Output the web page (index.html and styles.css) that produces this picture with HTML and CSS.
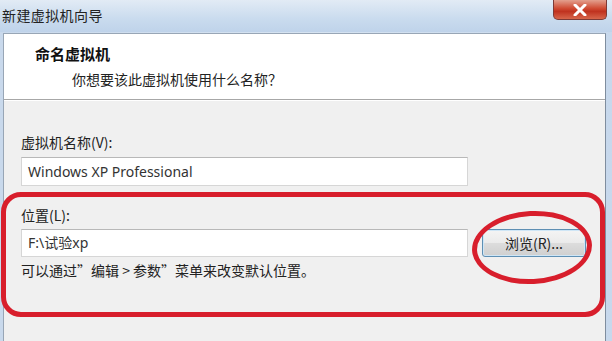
FILE: index.html
```html
<!DOCTYPE html>
<html lang="zh-CN">
<head>
<meta charset="utf-8">
<title>新建虚拟机向导</title>
<link rel="stylesheet" href="styles.css">
</head>
<body>
<div class="window">
  <div class="titlebar">
    <span class="title">新建虚拟机向导</span>
    <div class="close">
      <svg width="16" height="12" viewBox="0 0 16 12"><path d="M3 1 L13 11 M13 1 L3 11" stroke="#fff" stroke-width="3" stroke-linecap="round"/></svg>
    </div>
  </div>
  <div class="client">
    <div class="header">
      <div class="h-title">命名虚拟机</div>
      <div class="h-sub">你想要该此虚拟机使用什么名称？</div>
    </div>
    <div class="content">
      <div class="label">虚拟机名称(V):</div>
      <div class="input name">Windows XP Professional</div>
      <div class="label loc">位置(L):</div>
      <div class="row">
        <div class="input path">F:\试验xp</div>
        <div class="button">浏览(R)...</div>
      </div>
      <div class="hint">可以通过”编辑 &gt; 参数”菜单来改变默认位置。</div>
    </div>
  </div>
  <div class="mark-rect"></div>
  <div class="mark-ellipse"></div>
</div>
</body>
</html>
```
FILE: styles.css
```css
html, body {
  margin: 0;
  padding: 0;
}
body {
  width: 612px;
  height: 341px;
  overflow: hidden;
  background: #f0f0f0;
  font-family: "Noto Sans", "Noto Sans CJK SC", sans-serif;
  color: #1e1e1e;
}
.window {
  position: relative;
  width: 612px;
  height: 341px;
  display: flex;
  flex-direction: column;
  background: linear-gradient(90deg, #c9d9ec 0%, #d6e3f1 50%, #c7d8ec 100%);
}
.titlebar {
  height: 32px;
  flex: none;
  display: flex;
  align-items: flex-start;
  justify-content: space-between;
  background: linear-gradient(180deg, #e2ebf5 0%, #c9dbee 60%, #bfd3ea 100%);
}
.title {
  font-family: "Noto Sans CJK SC", sans-serif;
  font-size: 14px;
  line-height: 16px;
  margin: 7px 0 0 2px;
  color: #222;
  letter-spacing: 0.4px;
}
.close {
  width: 54px;
  height: 20px;
  margin-right: 5px;
  border: 1px solid #7d3a36;
  border-top: none;
  border-radius: 0 0 5px 5px;
  background: linear-gradient(180deg, #e3a08e 0%, #cf4a32 45%, #c0321f 60%, #d7664b 100%);
  display: flex;
  align-items: center;
  justify-content: center;
  box-sizing: border-box;
}
.client {
  flex: 1;
  margin: 1px 6px 0 3px;
  border-left: 1px solid #98a6b6;
  border-right: 1px solid #7f8d9e;
  border-top: 1px solid #98a6b6;
  background: #f0f0f0;
  display: flex;
  flex-direction: column;
}
.header {
  height: 66px;
  background: #fff;
  border-bottom: 1px solid #a7a7a7;
  box-shadow: 0 1px 0 #fff;
  box-sizing: border-box;
  padding: 10px 0 0 31px;
  font-family: "Noto Sans CJK SC", sans-serif;
}
.h-title {
  font-size: 15px;
  font-weight: bold;
  line-height: 20px;
  color: #111;
}
.h-sub {
  font-size: 14px;
  line-height: 20px;
  margin: 5px 0 0 37px;
  color: #222;
}
.content {
  padding: 32px 0 0 17px;
  font-size: 14px;
}
.label, .hint {
  font-family: "Noto Sans CJK SC", sans-serif;
  font-size: 14px;
  line-height: 20px;
  color: #222;
}
.input {
  width: 447px;
  box-sizing: border-box;
  background: #fff;
  border: 1px solid #d6d6d6;
  border-top-color: #b8b8b8;
  padding-left: 6px;
  font-family: "Noto Sans", "Noto Sans CJK SC", sans-serif;
  font-size: 14px;
  color: #333;
}
.name {
  height: 29px;
  line-height: 27px;
  margin-top: 5px;
}
.loc {
  margin-top: 19px;
}
.row {
  display: flex;
  align-items: flex-start;
  gap: 14px;
  margin-top: 4px;
}
.path {
  height: 28px;
  line-height: 26px;
}
.button {
  width: 104px;
  height: 28px;
  box-sizing: border-box;
  border: 1px solid #5e8fb3;
  border-radius: 3px;
  background: linear-gradient(180deg, #f4f4f4 0%, #ebebeb 48%, #dcdcdc 52%, #cfcfcf 100%);
  box-shadow: inset 0 0 0 1px #cfe6f6;
  text-align: center;
  line-height: 26px;
  font-family: "Noto Sans CJK SC", sans-serif;
  font-size: 14px;
  color: #222;
}
.hint {
  margin-top: 3px;
}
.mark-rect {
  position: absolute;
  left: 1px;
  top: 192px;
  width: 604px;
  height: 125px;
  box-sizing: border-box;
  border: 5px solid #d81e2c;
  border-radius: 20px;
}
.mark-ellipse {
  position: absolute;
  left: 472px;
  top: 211px;
  width: 120px;
  height: 73px;
  box-sizing: border-box;
  border: 5px solid #d81e2c;
  border-radius: 50%;
  transform: rotate(-3deg);
}
```
